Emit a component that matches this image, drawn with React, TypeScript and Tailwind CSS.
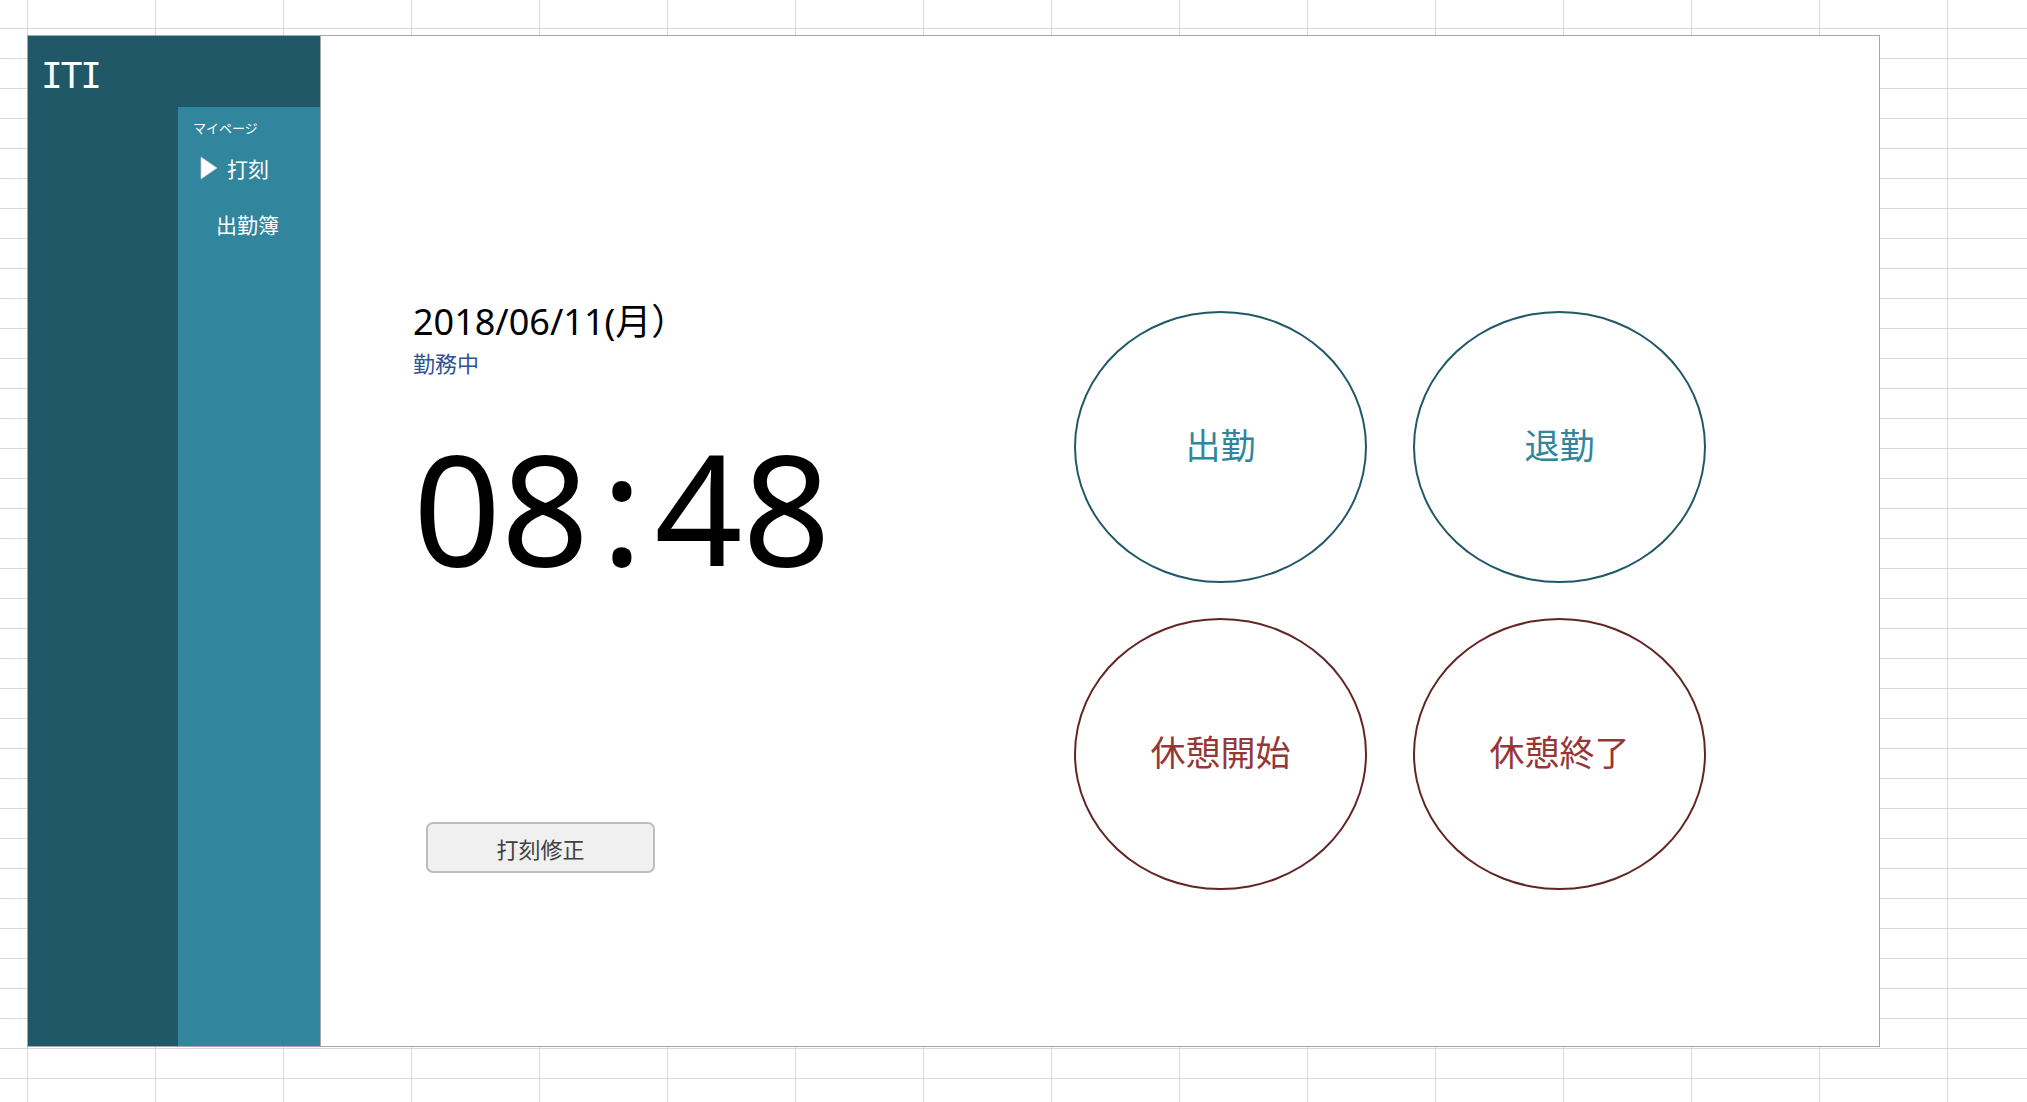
import React from "react";

const cjk = "font-['Noto_Sans_CJK_JP',sans-serif]";

function Ellipse({ label, tone }: { label: string; tone: "teal" | "red" }) {
  const cls =
    tone === "teal"
      ? "border-[#215868] text-[#31859c]"
      : "border-[#632523] text-[#953735]";
  return (
    <div
      className={`w-[293px] h-[272px] rounded-[50%] border-2 flex items-center justify-center ${cls}`}
    >
      <span className={`${cjk} text-[35px] leading-none -mt-[8px]`}>{label}</span>
    </div>
  );
}

export default function App() {
  return (
    <div className="w-[2027px] h-[1102px] overflow-hidden bg-white bg-[image:linear-gradient(to_right,#d9d9d9_1px,transparent_1px),linear-gradient(to_bottom,#d9d9d9_1px,transparent_1px)] bg-[size:128px_30px] bg-[position:27px_28px] pt-[35px] pl-[27px]">
      <div className="w-[1853px] h-[1012px] border border-[#a6a6a6] bg-white flex">
        {/* Sidebar */}
        <div className="w-[293px] h-full border-r border-[#a6a6a6] bg-[#215868] flex flex-col">
          <div className="h-[71px] pt-[22px] pl-[13px]">
            <div className="font-['DejaVu_Sans_Mono',monospace] text-[36px] leading-none tracking-[-2px] text-white">
              ITI
            </div>
          </div>
          <div className="flex-1 flex">
            <div className="w-[150px]" />
            <div className={`flex-1 bg-[#31859c] pt-[14px] pl-[15px] text-white ${cjk}`}>
              <div className="text-[13px] leading-none">マイページ</div>
              <div className="mt-[22px] pl-[7px] flex items-center gap-[9px]">
                <svg width="18" height="24" viewBox="0 0 18 24">
                  <polygon points="1,1 17,12 1,23" fill="#ffffff" stroke="#c8c8c8" strokeWidth="0.8" />
                </svg>
                <span className="text-[21px] leading-none">打刻</span>
              </div>
              <div className="mt-[34px] pl-[23px] text-[21px] leading-none">出勤簿</div>
            </div>
          </div>
        </div>

        {/* Main */}
        <div className="flex-1 flex items-start">
          <div className="w-[753px] pl-[92px] flex flex-col items-start">
            <div className="mt-[268px] font-['Noto_Sans','Noto_Sans_CJK_JP',sans-serif] text-[36px] leading-none text-black">
              2018/06/11(月）
            </div>
            <div className={`mt-[11px] ${cjk} text-[22px] leading-none text-[#2f5496]`}>
              勤務中
            </div>
            <div className="mt-[56px] font-['Noto_Sans',sans-serif] text-[154px] leading-none text-black whitespace-nowrap">
              08<span className="mx-[12px]">:</span>48
            </div>
            <button
              className={`mt-[239px] ml-[13px] w-[229px] h-[51px] rounded-[7px] border-2 border-[#bdbdbd] bg-[#f0f0f0] ${cjk} text-[22px] leading-none text-[#404040]`}
            >
              打刻修正
            </button>
          </div>
          <div className="mt-[275px] grid grid-cols-[293px_293px] gap-x-[46px] gap-y-[35px]">
            <Ellipse label="出勤" tone="teal" />
            <Ellipse label="退勤" tone="teal" />
            <Ellipse label="休憩開始" tone="red" />
            <Ellipse label="休憩終了" tone="red" />
          </div>
        </div>
      </div>
    </div>
  );
}
